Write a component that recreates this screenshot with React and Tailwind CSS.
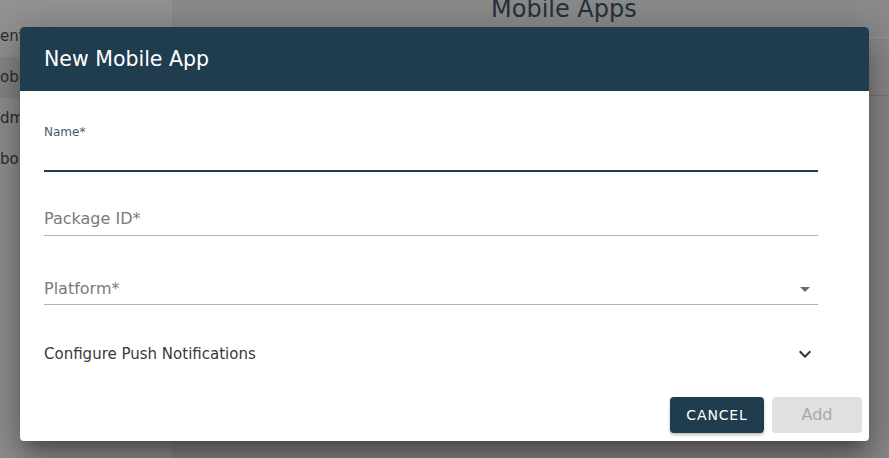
import React from "react";

const font = { fontFamily: '"DejaVu Sans", "Open Sans", sans-serif' };

function Sidebar() {
  const items = ["ent", "obi", "dm", "bou"];
  return (
    <div className="w-[173px] h-full bg-[#939393] border-r border-[#8a8a8a] pt-[16px]">
      {items.map((item, i) => (
        <div
          key={item}
          className={
            "h-[41px] flex items-center text-[15px] text-[#2e2e2e] " +
            (i === 1 ? "bg-[#898989]" : "")
          }
        >
          {item}
        </div>
      ))}
    </div>
  );
}

function Field({ label, select }) {
  return (
    <div className="w-[774px] flex items-center h-[24px] text-[16px] text-[#7a7a7a]">
      <span className="flex-1">{label}</span>
      {select && (
        <svg width="24" height="24" viewBox="0 0 24 24" className="mr-[1px]">
          <path d="M7 10l5 5 5-5z" fill="#6b6b6b" />
        </svg>
      )}
    </div>
  );
}

export default function App() {
  return (
    <div className="relative w-full h-[458px] overflow-hidden flex" style={font}>
      <Sidebar />
      <div className="flex-1 bg-[#8b8b8b]">
        <div className="h-[41px] border-b border-[#9a9a9a] pl-[318px] leading-none">
          <span className="block -mt-[3px] text-[24px] text-[#24313b]">Mobile Apps</span>
        </div>
        <div className="h-[58px] border-b border-[#7a7a7a]"></div>
      </div>

      <div className="absolute inset-0 flex justify-center pt-[27px]">
        <div className="w-[849px] h-[414px] bg-white rounded-[4px] overflow-hidden shadow-[0_11px_15px_-7px_rgba(0,0,0,0.3),0_24px_38px_3px_rgba(0,0,0,0.2),0_9px_46px_8px_rgba(0,0,0,0.18)] flex flex-col">
          <div className="h-[64px] bg-[#203c4f] flex items-center px-[24px]">
            <h2 className="text-[20.5px] text-white font-normal">New Mobile App</h2>
          </div>

          <div className="px-[24px] flex-1">
            <div className="pt-[33px] w-[774px]">
              <div className="text-[12px] leading-[16px] text-[#415b6d]">Name*</div>
              <div className="h-[32px] border-b-2 border-[#203c4f]"></div>
            </div>

            <div className="pt-[35px] pb-[4px] border-b border-[#b0b0b0] w-[774px]">
              <Field label="Package ID*" />
            </div>

            <div className="pt-[41px] pb-[3px] border-b border-[#b0b0b0] w-[774px]">
              <Field label="Platform*" select />
            </div>

            <div className="mt-[37px] w-[774px] h-[24px] flex items-center justify-between text-[15px] text-[#3a3a3a]">
              <span>Configure Push Notifications</span>
              <svg width="24" height="24" viewBox="0 0 24 24" className="mr-[1px]">
                <path d="M7.41 8.59 12 13.17l4.59-4.58L18 10l-6 6-6-6z" fill="#333" />
              </svg>
            </div>
          </div>

          <div className="flex justify-end gap-[8px] px-[7px] pb-[8px]">
            <button className="w-[94px] h-[36px] rounded-[4px] bg-[#203c4f] text-white text-[14px] tracking-[0.06em] shadow-[0_2px_3px_rgba(0,0,0,0.25)]">
              CANCEL
            </button>
            <button className="w-[90px] h-[36px] rounded-[4px] bg-[#e0e0e0] text-[#a8a8a8] text-[16px]">
              Add
            </button>
          </div>
        </div>
      </div>
    </div>
  );
}
